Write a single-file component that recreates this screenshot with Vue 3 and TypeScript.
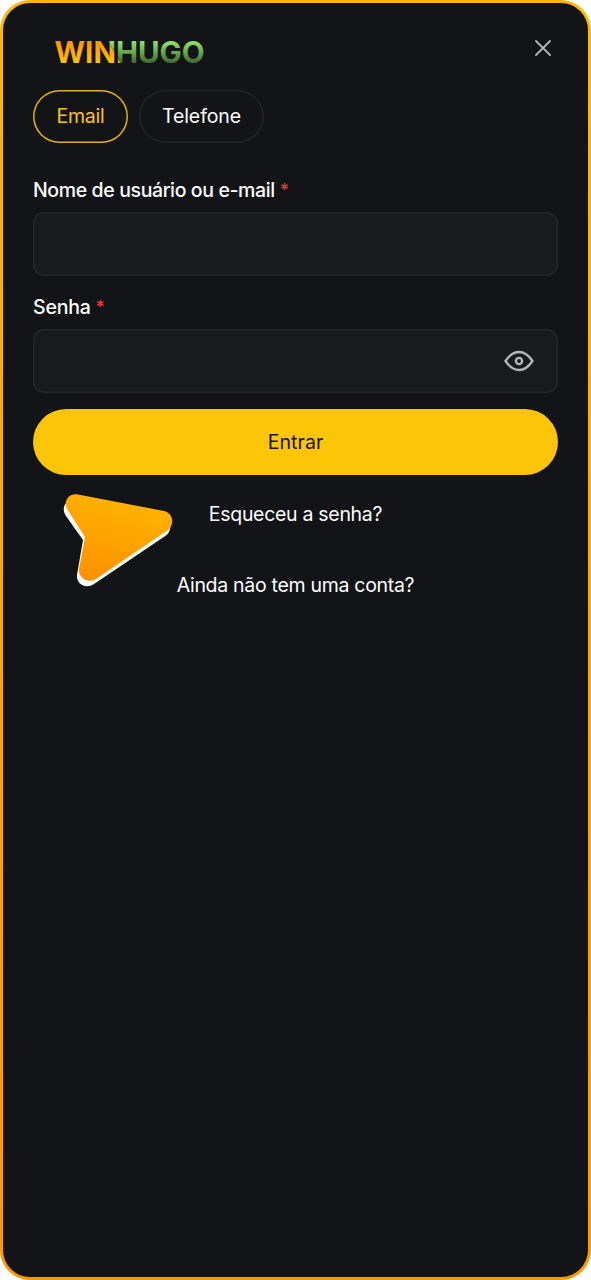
<script setup lang="ts">
import { ref } from 'vue'

type Tab = 'email' | 'phone'
const activeTab = ref<Tab>('email')
const tabs: { id: Tab; label: string }[] = [
  { id: 'email', label: 'Email' },
  { id: 'phone', label: 'Telefone' },
]
const user = ref('')
const password = ref('')
const reveal = ref(false)
</script>

<template>
  <main class="frame">
    <form class="panel" @submit.prevent>
      <header class="header">
        <svg class="logo" width="160" height="36" viewBox="0 0 160 36" role="img">
          <defs>
            <linearGradient id="gold" gradientUnits="userSpaceOnUse" x1="0" y1="7" x2="0" y2="29">
              <stop offset="0" stop-color="#ff9300" />
              <stop offset="1" stop-color="#ffc107" />
            </linearGradient>
            <linearGradient id="green" gradientUnits="userSpaceOnUse" x1="0" y1="7" x2="0" y2="29">
              <stop offset="0.1" stop-color="#8cdb64" />
              <stop offset="1" stop-color="#3e692d" />
            </linearGradient>
            <clipPath id="left"><path d="M0 0H49L69.500 36H0Z" /></clipPath>
            <clipPath id="right"><path d="M49 0H160V36H69.500Z" /></clipPath>
          </defs>
          <text class="brand" x="-0.5" y="28.500" textLength="150" fill="url(#gold)" clip-path="url(#left)">WINHUGO</text>
          <text class="brand" x="-0.5" y="28.500" textLength="150" fill="url(#green)" clip-path="url(#right)" aria-hidden="true">WINHUGO</text>
        </svg>
        <button class="close" type="button" aria-label="Fechar">
          <svg width="18" height="18" viewBox="0 0 18 18"><path d="M2 2L16 16M16 2L2 16" /></svg>
        </button>
      </header>

      <nav class="tabs">
        <button
          v-for="tab in tabs"
          :key="tab.id"
          type="button"
          class="tab"
          :class="[tab.id, { active: activeTab === tab.id }]"
          @click="activeTab = tab.id"
        >{{ tab.label }}</button>
      </nav>

      <div class="field">
        <label for="user"><span class="label-user">Nome de usuário ou e-mail</span><span class="star">*</span></label>
        <div class="box"><input id="user" v-model="user" type="text" /></div>
      </div>
      <div class="field">
        <label for="password"><span class="label-pass">Senha</span><span class="star">*</span></label>
        <div class="box">
          <input id="password" v-model="password" :type="reveal ? 'text' : 'password'" />
          <button class="eye" type="button" aria-label="Mostrar senha" @click="reveal = !reveal">
            <svg width="30" height="22" viewBox="0 0 30 22">
              <path d="M1.500 11C5.500 5 9.500 2 15 2S24.500 5 28.500 11C24.500 17 20.500 20 15 20S5.500 17 1.500 11Z" />
              <circle cx="15" cy="11" r="3.100" />
            </svg>
          </button>
        </div>
      </div>

      <button class="submit" type="submit">Entrar</button>

      <div class="links">
        <a class="forgot">Esqueceu a senha?</a>
        <a class="register">Ainda não tem uma conta?</a>
        <svg class="arrow" width="120" height="104" viewBox="0 0 120 104">
          <defs>
            <linearGradient id="arrowFill" x1="0.7" y1="0" x2="0.35" y2="1">
              <stop offset="0" stop-color="#ffb600" />
              <stop offset="1" stop-color="#ff9200" />
            </linearGradient>
          </defs>
          <path class="edge" d="M16 12L102 29C111 31 113 42 106 47.500L34 96C26 101.500 16 96 17 87L23 52L6 28C0 19 7 10 16 12Z" />
          <path d="M18 6.500L104 23C113 25 115 36 108 42L36 91C28 96 18 90 19 81L25 49L8 22.500C2 13.500 9 4.500 18 6.500Z" fill="url(#arrowFill)" />
        </svg>
      </div>
    </form>
  </main>
</template>

<style>
body {
  background: #fff;
}
</style>

<style scoped>
.frame {
  box-sizing: border-box;
  height: 1280px;
  padding: 3px;
  border-radius: 30px;
  background: linear-gradient(#ffb900, #ff9800);
  font-family: Inter, "Noto Sans", sans-serif;
  font-size: 19.5px;
  color: #fff;
}
.panel {
  box-sizing: border-box;
  height: 100%;
  padding: 0 30px;
  border-radius: 27px;
  background: #131417;
}
button {
  padding: 0;
  font: inherit;
  cursor: pointer;
}
.header {
  display: flex;
  justify-content: space-between;
  height: 87px;
  padding: 31px 6px 0 22px;
  box-sizing: border-box;
}
.logo,
.close svg,
.eye svg {
  display: block;
}
.brand {
  font-size: 29.5px;
  font-weight: 650;
}
.close {
  align-self: flex-start;
  margin-top: 5px;
  border: 0;
  background: none;
}
.close path {
  stroke: #b5b5b7;
  stroke-width: 1.8;
  stroke-linecap: round;
}
.tabs {
  display: flex;
  gap: 11px;
}
.tab {
  box-sizing: border-box;
  height: 53px;
  padding-bottom: 1px;
  border: 0;
  box-shadow: inset 0 0 0 1.5px #232427;
  border-radius: 27px;
  background: none;
  color: #fff;
}
.tab.email {
  width: 95px;
  letter-spacing: -0.2px;
}
.tab.phone {
  width: 125px;
  letter-spacing: -0.1px;
}
.tab.active {
  box-shadow: inset 0 0 0 1.5px #e2b10a;
  color: #fcc507;
}
.field {
  margin-top: 18px;
}
.tabs + .field {
  margin-top: 34px;
}
label {
  display: flex;
  gap: 5px;
  height: 35px;
  line-height: 27px;
  font-weight: 500;
}
.label-user {
  letter-spacing: -0.38px;
}
.label-pass {
  letter-spacing: -0.2px;
}
.star {
  color: #e53935;
  font-size: 17px;
  font-weight: 600;
}
.box {
  box-sizing: border-box;
  display: flex;
  align-items: center;
  height: 64px;
  padding: 0 24px 0 24px;
  box-shadow: inset 0 0 0 1.5px #26272b;
  border-radius: 11px;
  background: #191a1e;
}
input {
  flex: 1;
  min-width: 0;
  height: 100%;
  padding: 0;
  border: 0;
  outline: 0;
  background: none;
  font: inherit;
  color: #fff;
}
.eye {
  border: 0;
  background: none;
}
.eye path,
.eye circle {
  fill: none;
  stroke: #b5b5b7;
  stroke-width: 2.4;
  stroke-linejoin: round;
}
.submit {
  display: block;
  width: 100%;
  height: 66px;
  margin-top: 16px;
  border: 0;
  border-radius: 33px;
  background: #fcc507;
  color: #131417;
  letter-spacing: 0.05px;
}
.links {
  position: relative;
  display: flex;
  flex-direction: column;
  align-items: center;
  gap: 45px;
  padding-top: 26px;
  line-height: 26px;
}
.forgot,
.register {
  letter-spacing: -0.3px;
}
.arrow {
  position: absolute;
  left: 27px;
  top: 13px;
}
.edge {
  fill: #fff;
}
</style>
